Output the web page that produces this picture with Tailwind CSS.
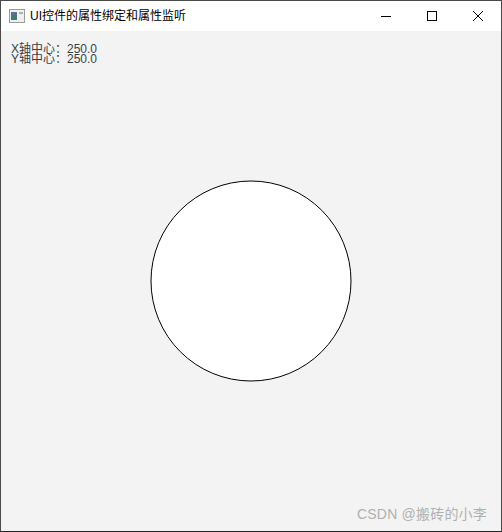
<!DOCTYPE html>
<html lang="en">
<head>
    <meta charset="UTF-8">
    <title>UI控件的属性绑定和属性监听</title>
    <script src="https://cdn.jsdelivr.net/npm/@tailwindcss/browser@4"></script>
</head>
<body class="w-[502px] h-[532px] overflow-hidden bg-[#f3f3f3] font-['Liberation_Sans','Noto_Sans_CJK_SC',sans-serif]">
    <div class="relative w-[502px] h-[532px] flex flex-col border border-[#4a4a4a] border-b-[#222]">
        <!-- title bar -->
        <header class="h-[30px] bg-white flex items-center shrink-0">
            <svg class="ml-[8px] w-[16px] h-[14px]" viewBox="0 0 16 14">
                <rect x="0.5" y="0.5" width="15" height="13" fill="#eef0f0" stroke="#9a9a9a"/>
                <rect x="2" y="3" width="6" height="8" fill="#3f7a78"/>
                <rect x="2" y="3" width="6" height="3" fill="#5c6f8c"/>
                <rect x="10" y="3" width="4" height="2" fill="#a8b4b4"/>
            </svg>
            <span class="ml-[5px] text-[12px] leading-[16px] text-black">UI控件的属性绑定和属性监听</span>
            <div class="ml-auto flex items-center">
                <div class="w-[46px] h-[30px] flex items-center justify-center">
                    <svg class="w-[10px] h-[10px]" viewBox="0 0 10 10"><path d="M0 5.5H10" stroke="#000" fill="none"/></svg>
                </div>
                <div class="w-[46px] h-[30px] flex items-center justify-center">
                    <svg class="w-[10px] h-[10px]" viewBox="0 0 10 10"><rect x="0.5" y="0.5" width="9" height="9" stroke="#000" fill="none"/></svg>
                </div>
                <div class="w-[46px] h-[30px] flex items-center justify-center">
                    <svg class="w-[10px] h-[10px]" viewBox="0 0 10 10"><path d="M0 0L10 10M10 0L0 10" stroke="#000" stroke-width="1" fill="none"/></svg>
                </div>
            </div>
        </header>

        <main class="relative flex-1">
            <div class="pl-[10px] pt-[13px] text-[12px] text-[#3a3f4a]">
                <p class="h-[10px] leading-[10px]">X轴中心：250.0</p>
                <p class="h-[10px] leading-[10px]">Y轴中心：250.0</p>
            </div>
            <svg class="absolute left-[149px] top-[149px] w-[202px] h-[202px]" viewBox="0 0 202 202">
                <circle cx="101" cy="101" r="100" fill="#fff" stroke="#000" stroke-width="1"/>
            </svg>
            <span class="absolute right-[14px] bottom-[7px] text-[14px] leading-[20px] tracking-[0.2px] text-[#b0b0b0]">CSDN @搬砖的小李</span>
        </main>
    </div>
</body>
</html>
